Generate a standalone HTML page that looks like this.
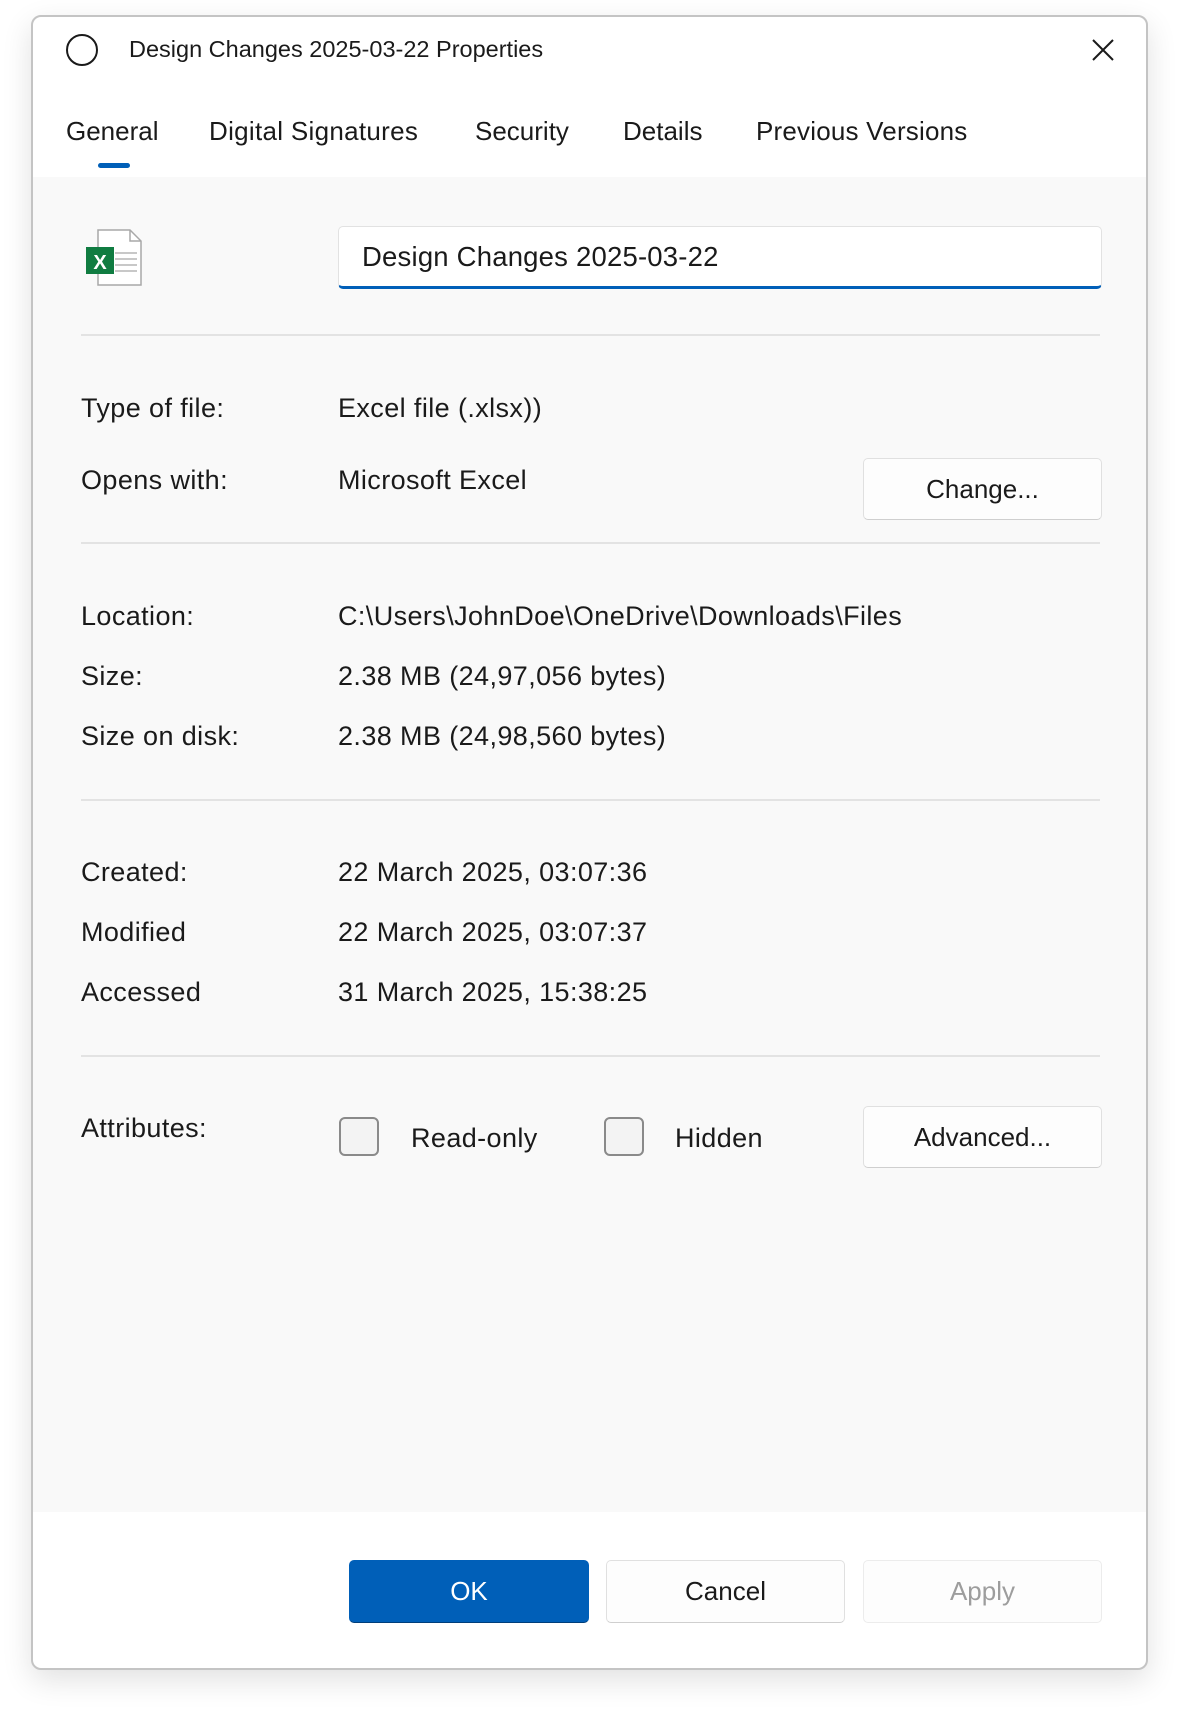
<!DOCTYPE html>
<html><head><meta charset="utf-8"><style>
*{margin:0;padding:0;box-sizing:border-box}
body{width:1180px;height:1718px;background:#fff;font-family:"Segoe UI","Liberation Sans",sans-serif;color:#1a1a1a;position:relative;overflow:hidden}
.win{position:absolute;left:31px;top:15px;width:1117px;height:1655px;border:2px solid #c4c4c4;border-radius:10px;background:#fff;box-shadow:0 10px 30px rgba(0,0,0,.12);overflow:hidden}
.abs{position:absolute;white-space:nowrap}
.content{position:absolute;left:0;top:160px;width:100%;height:1335px;background:#f9f9f9}
.t{font-size:27px;line-height:30px;letter-spacing:0.4px}
.sep{position:absolute;left:48px;width:1019px;height:2px;background:#e3e3e3}
.btn{position:absolute;background:#fdfdfd;border:1.5px solid #e0e0e0;border-bottom-color:#cfcfcf;border-radius:5px;font-size:26px;display:flex;align-items:center;justify-content:center}
.cb{position:absolute;width:40px;height:39px;border:2px solid #8a8a8a;border-radius:6px;background:#f3f3f3}
</style></head><body>
<div class="win">
  <div class="abs" style="left:33px;top:17px;width:32px;height:32px;border:2.5px solid #1a1a1a;border-radius:50%"></div>
  <div class="abs" style="left:96px;top:17px;font-size:23.5px;line-height:30px">Design Changes 2025-03-22 Properties</div>
  <svg class="abs" style="left:1058px;top:21px" width="24" height="24" viewBox="0 0 24 24"><path d="M2 2L22 22M22 2L2 22" stroke="#1a1a1a" stroke-width="2"/></svg>
  <div class="abs" style="left:33px;top:98px;font-size:26px;line-height:32px">General</div>
  <div class="abs" style="left:176px;top:98px;font-size:26px;line-height:32px;letter-spacing:0.3px">Digital Signatures</div>
  <div class="abs" style="left:442px;top:98px;font-size:26px;line-height:32px">Security</div>
  <div class="abs" style="left:590px;top:98px;font-size:26px;line-height:32px">Details</div>
  <div class="abs" style="left:723px;top:98px;font-size:26px;line-height:32px;letter-spacing:0.2px">Previous Versions</div>
  <div class="abs" style="left:65px;top:146px;width:32px;height:5px;border-radius:3px;background:#005fb8"></div>
  <div class="content">
    <svg class="abs" style="left:52px;top:52px" width="58" height="58" viewBox="0 0 58 58">
      <path d="M13 1H45L56 12V56H13Z" fill="#fff" stroke="#a8a8a8" stroke-width="1.5"/>
      <path d="M45 1V12H56" fill="none" stroke="#a8a8a8" stroke-width="1.5"/>
      <g stroke="#c8c8c8" stroke-width="2"><path d="M30 24H52M30 30H52M30 36H52M30 42H52"/></g>
      <rect x="1" y="18" width="28" height="27" fill="#107c41"/>
      <text x="15" y="40" font-family="Liberation Sans,sans-serif" font-weight="bold" font-size="20" fill="#fff" text-anchor="middle">X</text>
    </svg>
    <div class="abs" style="left:305px;top:49px;width:764px;height:63px;background:#fff;border:1.5px solid #e2e2e2;border-bottom:3px solid #005fb8;border-radius:5px"></div>
    <div class="abs" style="left:329px;top:64px;font-size:27.5px;line-height:32px;letter-spacing:0.2px">Design Changes 2025-03-22</div>
    <div class="sep" style="top:157px"></div>
    <div class="abs t" style="left:48px;top:216px">Type of file:</div>
    <div class="abs t" style="left:305px;top:216px">Excel file (.xlsx))</div>
    <div class="abs t" style="left:48px;top:288px">Opens with:</div>
    <div class="abs t" style="left:305px;top:288px">Microsoft Excel</div>
    <div class="btn" style="left:830px;top:281px;width:239px;height:62px">Change...</div>
    <div class="sep" style="top:365px"></div>
    <div class="abs t" style="left:48px;top:424px">Location:</div>
    <div class="abs t" style="left:305px;top:424px">C:\Users\JohnDoe\OneDrive\Downloads\Files</div>
    <div class="abs t" style="left:48px;top:484px">Size:</div>
    <div class="abs t" style="left:305px;top:484px">2.38 MB (24,97,056 bytes)</div>
    <div class="abs t" style="left:48px;top:544px">Size on disk:</div>
    <div class="abs t" style="left:305px;top:544px">2.38 MB (24,98,560 bytes)</div>
    <div class="sep" style="top:622px"></div>
    <div class="abs t" style="left:48px;top:680px">Created:</div>
    <div class="abs t" style="left:305px;top:680px">22 March 2025, 03:07:36</div>
    <div class="abs t" style="left:48px;top:740px">Modified</div>
    <div class="abs t" style="left:305px;top:740px">22 March 2025, 03:07:37</div>
    <div class="abs t" style="left:48px;top:800px">Accessed</div>
    <div class="abs t" style="left:305px;top:800px">31 March 2025, 15:38:25</div>
    <div class="sep" style="top:878px"></div>
    <div class="abs t" style="left:48px;top:936px">Attributes:</div>
    <div class="cb" style="left:306px;top:940px"></div>
    <div class="abs t" style="left:378px;top:946px">Read-only</div>
    <div class="cb" style="left:571px;top:940px"></div>
    <div class="abs t" style="left:642px;top:946px">Hidden</div>
    <div class="btn" style="left:830px;top:929px;width:239px;height:62px">Advanced...</div>
  </div>
  <div class="btn" style="left:316px;top:1543px;width:240px;height:63px;background:#005fb8;border-color:#005fb8;border-bottom-color:#003e7a;color:#fff">OK</div>
  <div class="btn" style="left:573px;top:1543px;width:239px;height:63px">Cancel</div>
  <div class="btn" style="left:830px;top:1543px;width:239px;height:63px;color:#9d9d9d;border-color:#ececec">Apply</div>
</div>
</body></html>
